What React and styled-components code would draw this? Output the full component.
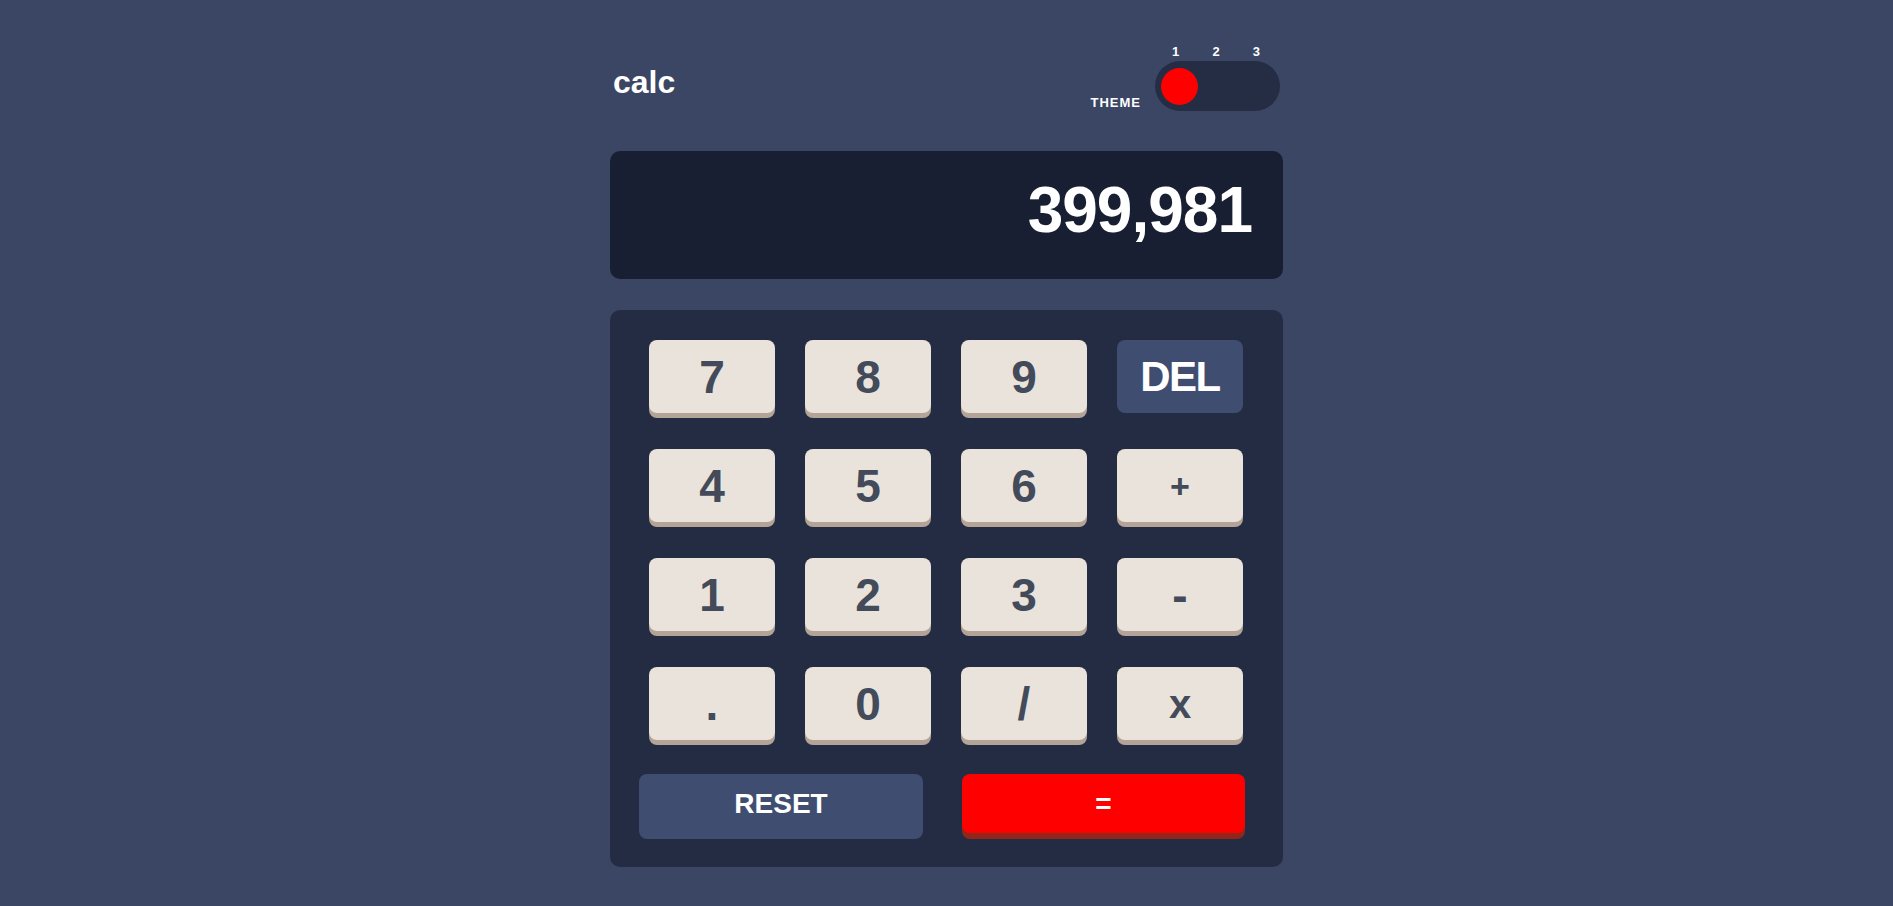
import React from "react"
import styled, { createGlobalStyle } from "styled-components"

const GlobalStyle = createGlobalStyle`
  html, body {
    margin: 0;
    padding: 0;
    background: #3b4664;
    font-family: "Liberation Sans", Arial, sans-serif;
    font-weight: 700;
  }
`

const Page = styled.div`
  height: 100vh;
  overflow: hidden;
  display: flex;
  justify-content: center;
  background: #3b4664;
`

const Calculator = styled.div`
  width: 673px;
  padding-top: 45px;
`

const Header = styled.header`
  display: flex;
  justify-content: space-between;
  align-items: flex-end;
  padding-left: 3px;
  padding-right: 3px;
`

const Logo = styled.h1`
  margin: 0 0 13px;
  font-size: 32px;
  line-height: 32px;
  font-weight: 700;
  color: #fff;
`

const ThemeSwitch = styled.div`
  display: flex;
  align-items: flex-end;
  gap: 14px;
`

const ThemeLabel = styled.span`
  font-size: 13px;
  line-height: 16px;
  letter-spacing: 1px;
  color: #fff;
`

const ToggleColumn = styled.div`
  display: flex;
  flex-direction: column;
`

const Numbers = styled.div`
  display: flex;
  justify-content: space-between;
  padding: 0 20px 0 17px;
  margin-bottom: 2px;
  font-size: 13px;
  line-height: 14px;
  color: #fff;
`

const Track = styled.div`
  width: 125px;
  height: 50px;
  box-sizing: border-box;
  padding: 6px;
  border-radius: 25px;
  background: #242d44;
  display: flex;
  align-items: center;
`

const Knob = styled.span`
  width: 37px;
  height: 37px;
  border-radius: 50%;
  background: #ff0000;
`

const Screen = styled.div`
  margin-top: 40px;
  height: 128px;
  box-sizing: border-box;
  padding: 27px 31px 37px;
  border-radius: 10px;
  background: #191f33;
  color: #fff;
  text-align: right;
  font-size: 64px;
  line-height: 64px;
  letter-spacing: -1px;
`

const Keypad = styled.div`
  margin-top: 31px;
  padding: 30px 39px 28px;
  border-radius: 10px;
  background: #242c44;
`

const Keys = styled.div`
  display: grid;
  grid-template-columns: repeat(4, 126px);
  grid-auto-rows: 73px;
  column-gap: 30px;
  row-gap: 36px;
`

const Key = styled.button`
  border: none;
  border-radius: 8px;
  font-family: inherit;
  font-weight: 700;
  display: flex;
  align-items: center;
  justify-content: center;
  cursor: pointer;
  padding: 0 0 ${({ $lift }) => $lift || 0}px;
  background: ${({ $variant }) =>
    $variant === "dark" ? "#3f4d70" : $variant === "red" ? "#ff0000" : "#e9e3db"};
  color: ${({ $variant }) => ($variant ? "#fff" : "#434a59")};
  box-shadow: 0 ${({ $variant }) => ($variant === "red" ? "6px" : "5px")} 0
    ${({ $variant }) =>
      $variant === "dark" ? "transparent" : $variant === "red" ? "#93261a" : "#b3a497"};
  font-size: ${({ $size }) => $size || 46}px;
  letter-spacing: ${({ $spacing }) => $spacing || 0}px;
  line-height: 1;
`

const WideKey = styled(Key)`
  height: ${({ $height }) => $height}px;
`

const BottomRow = styled.div`
  display: grid;
  grid-template-columns: 284px 283px;
  column-gap: 39px;
  align-items: start;
  margin: 34px 0 0 -10px;
`

const keys = [
  ["7"], ["8"], ["9"], ["DEL", "dark", 42, -1.5],
  ["4"], ["5"], ["6"], ["+", undefined, 34],
  ["1"], ["2"], ["3"], ["-"],
  ["."], ["0"], ["/"], ["x", undefined, 40],
]

const App = () => (
  <Page>
    <GlobalStyle />
    <Calculator>
      <Header>
        <Logo>calc</Logo>
        <ThemeSwitch>
          <ThemeLabel>THEME</ThemeLabel>
          <ToggleColumn>
            <Numbers>
              <span>1</span>
              <span>2</span>
              <span>3</span>
            </Numbers>
            <Track>
              <Knob />
            </Track>
          </ToggleColumn>
        </ThemeSwitch>
      </Header>
      <Screen>399,981</Screen>
      <Keypad>
        <Keys>
          {keys.map(([label, variant, size, spacing]) => (
            <Key key={label} $variant={variant} $size={size} $spacing={spacing}>
              {label}
            </Key>
          ))}
        </Keys>
        <BottomRow>
          <WideKey $variant="dark" $size={28} $height={65} $lift={5}>
            RESET
          </WideKey>
          <WideKey $variant="red" $size={28} $height={59}>
            =
          </WideKey>
        </BottomRow>
      </Keypad>
    </Calculator>
  </Page>
)

export default App
